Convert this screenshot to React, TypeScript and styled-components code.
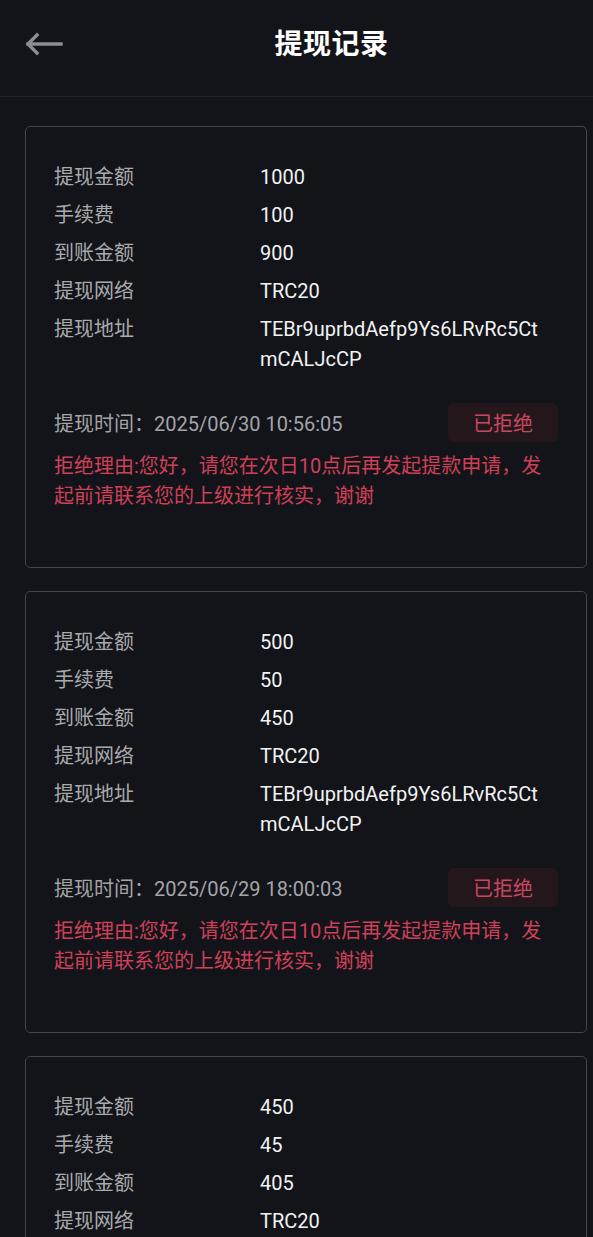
import React from 'react';
import styled, { createGlobalStyle } from 'styled-components';

const GlobalStyle = createGlobalStyle`
  html, body {
    margin: 0;
    padding: 0;
    background: #131419;
  }
  body {
    font-family: Roboto, "Noto Sans CJK SC", sans-serif;
    color: #f2f2f2;
  }
`;

const Page = styled.div`
  width: 593px;
  height: 1237px;
  overflow: hidden;
  background: #131419;
`;

const Header = styled.header`
  display: flex;
  align-items: center;
  height: 96px;
  border-bottom: 1px solid #25262b;
`;

const BackButton = styled.div`
  width: 70px;
  height: 100%;
  display: flex;
  align-items: center;
  padding-left: 23px;
  box-sizing: border-box;
  margin-top: -8px;
`;

const Title = styled.h1`
  flex: 1;
  margin: 0;
  margin-top: -12px;
  text-align: center;
  font-size: 28px;
  font-weight: 700;
  color: #ffffff;
  letter-spacing: 0.5px;
`;

const List = styled.main`
  display: flex;
  flex-direction: column;
  gap: 23px;
  padding: 29px 6px 0 25px;
`;

const Card = styled.section`
  border: 1.5px solid #45464c;
  border-radius: 5px;
  padding: 35px 28px 56px 28px;
`;

const Row = styled.div`
  display: flex;
  align-items: flex-start;
  font-size: 20px;
  line-height: 30px;
  & + & {
    margin-top: 8px;
  }
`;

const Label = styled.span`
  width: 206px;
  flex-shrink: 0;
  color: #a9aaae;
`;

const Value = styled.span`
  color: #f2f2f2;
  max-width: 292px;
  word-break: break-all;
`;

const Footer = styled.div`
  display: flex;
  align-items: center;
  justify-content: space-between;
  margin-top: 29px;
`;

const Time = styled.span`
  font-size: 20px;
  color: #a3a4a8;
`;

const Status = styled.span`
  width: 110px;
  height: 39px;
  display: flex;
  align-items: center;
  justify-content: center;
  border-radius: 6px;
  background: #24171c;
  color: #c8475e;
  font-size: 20px;
`;

const Reason = styled.p`
  margin: 9px 0 0;
  font-size: 20px;
  line-height: 30px;
  color: #cf4058;
`;

type Record = {
  amount: string;
  fee: string;
  received: string;
  network: string;
  address?: string;
  time?: string;
  reason?: string;
};

const address = 'TEBr9uprbdAefp9Ys6LRvRc5CtmCALJcCP';
const reason = '拒绝理由:您好，请您在次日10点后再发起提款申请，发起前请联系您的上级进行核实，谢谢';

const records: Record[] = [
  { amount: '1000', fee: '100', received: '900', network: 'TRC20', address, time: '2025/06/30 10:56:05', reason },
  { amount: '500', fee: '50', received: '450', network: 'TRC20', address, time: '2025/06/29 18:00:03', reason },
  { amount: '450', fee: '45', received: '405', network: 'TRC20', address, time: '2025/06/29 12:10:41', reason },
];

const BackArrow = () => (
  <svg width="40" height="26" viewBox="0 0 40 26" fill="none">
    <path d="M38 13H5M14 4L5 13l9 9" stroke="#8b8d93" strokeWidth="3.4" strokeLinecap="square" />
  </svg>
);

const RecordCard = ({ r }: { r: Record }) => (
  <Card>
    <Row><Label>提现金额</Label><Value>{r.amount}</Value></Row>
    <Row><Label>手续费</Label><Value>{r.fee}</Value></Row>
    <Row><Label>到账金额</Label><Value>{r.received}</Value></Row>
    <Row><Label>提现网络</Label><Value>{r.network}</Value></Row>
    <Row><Label>提现地址</Label><Value>{r.address}</Value></Row>
    <Footer>
      <Time>提现时间：{r.time}</Time>
      <Status>已拒绝</Status>
    </Footer>
    <Reason>{r.reason}</Reason>
  </Card>
);

const App = () => (
  <>
    <GlobalStyle />
    <Page>
      <Header>
        <BackButton><BackArrow /></BackButton>
        <Title>提现记录</Title>
      </Header>
      <List>
        {records.map((r, i) => (
          <RecordCard key={i} r={r} />
        ))}
      </List>
    </Page>
  </>
);

export default App;
